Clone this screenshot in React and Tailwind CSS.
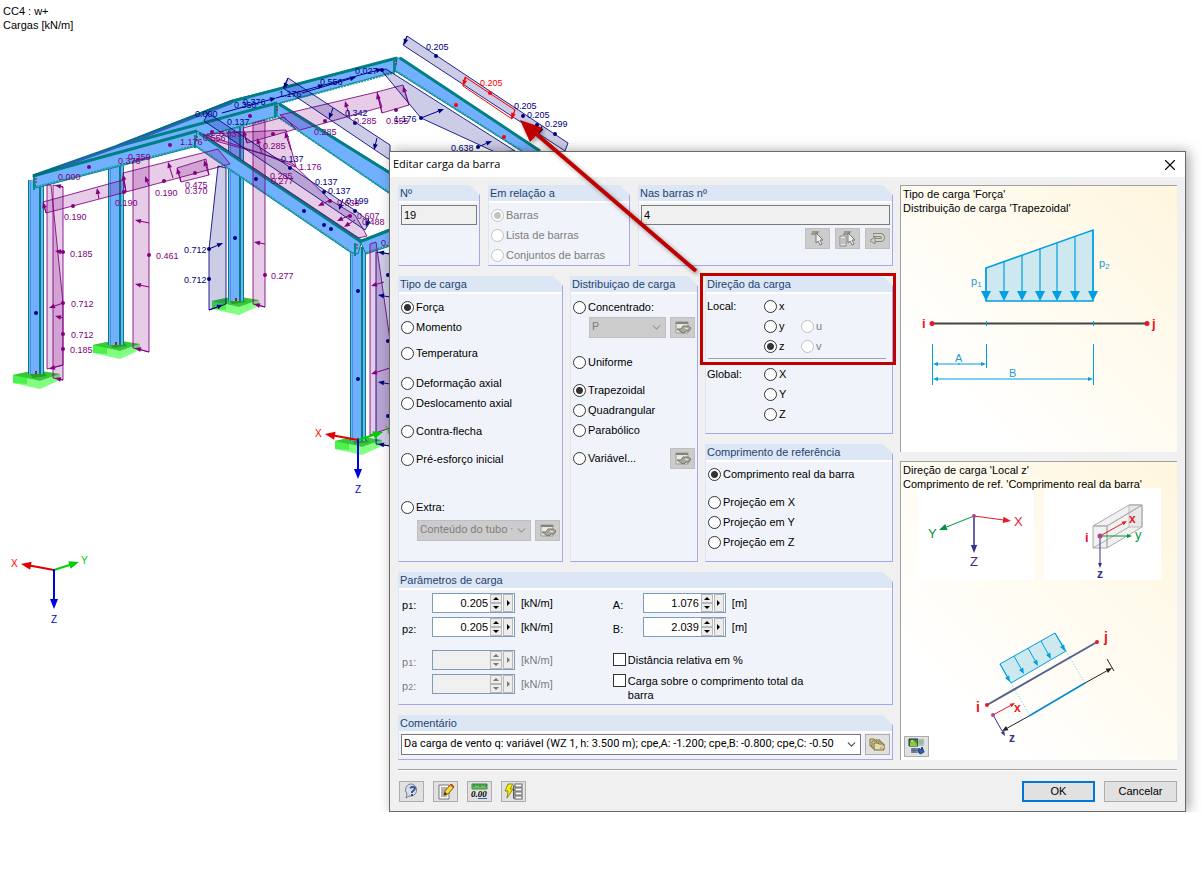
import clsx from 'clsx'
import { ChevronDown, X } from 'lucide-react'

const NAVY = '#000080'
const PURPLE = '#800080'

const SUPPORTS = [[13, 375], [93, 345], [212, 301], [335, 441]]

const COLUMNS = [
  { x: 28, top: 180, bottom: 374 },
  { x: 108, top: 166, bottom: 345 },
  { x: 228, top: 118, bottom: 301 },
  { x: 350, top: 247, bottom: 441 },
]

// Load areas: colour + outline points
const LOADS = [
  [PURPLE, '53,185 63,187 63,380 53,378'],
  [PURPLE, '47,185 51,185 63,303 63,365 47,369'],
  [PURPLE, '133,161 149,157 149,352 133,348'],
  [PURPLE, '253,123 265,120 265,307 253,304'],
  [PURPLE, '43,202 123,180 126,192 46,213'],
  [PURPLE, '123,173 218,149 230,164 126,192'],
  [PURPLE, '177,168 206,159 209,175 181,182'],
  [PURPLE, '243,128 284,117 296,129 247,143'],
  [PURPLE, '280,115 377,92 382,107 300,130'],
  [PURPLE, '377,92 403,85 409,105 382,113'],
  [PURPLE, '207,134 286,130 296,167 263,154 212,140'],
  [PURPLE, '203,134 263,154 292,163 330,200 355,215 367,236 358,238'],
  [PURPLE, '370,244 376,242 390,340 390,428 370,435'],
  [NAVY, '218,166 226,168 226,304 209,310 209,249'],
  [NAVY, '204,121 208,113 356,211 370,222 365,230'],
  [NAVY, '283,88 288,78 390,145 390,160'],
  [NAVY, '403,45 407,36 568,143 565,151'],
  [NAVY, '381,70 386,69 515,151 495,152 421,118'],
  [NAVY, '376,252 390,254 390,446 376,444'],
]

// [colour, x1, y1, x2, y2], head at the second point
const ARROWS = [
  [PURPLE, 63, 252, 55, 251], [PURPLE, 63, 303, 49, 308], [PURPLE, 63, 318, 55, 316],
  [PURPLE, 63, 365, 49, 369], [PURPLE, 63, 380, 55, 378], [PURPLE, 63, 187, 55, 185],
  [PURPLE, 149, 223, 135, 220], [PURPLE, 149, 287, 135, 284], [PURPLE, 149, 352, 135, 348],
  [PURPLE, 265, 244, 254, 242], [PURPLE, 265, 307, 254, 304],
  [PURPLE, 46, 213, 43, 202], [PURPLE, 99, 199, 97, 188], [PURPLE, 126, 192, 123, 174],
  [PURPLE, 149, 186, 145, 176], [PURPLE, 173, 178, 168, 162], [PURPLE, 181, 182, 177, 168],
  [PURPLE, 209, 175, 204, 160], [PURPLE, 247, 143, 243, 130], [PURPLE, 262, 154, 257, 138],
  [PURPLE, 291, 150, 285, 132], [PURPLE, 350, 118, 345, 101], [PURPLE, 382, 113, 377, 93],
  [PURPLE, 409, 105, 403, 86], [PURPLE, 330, 200, 318, 206], [PURPLE, 350, 215, 337, 221],
  [PURPLE, 355, 220, 344, 227], [PURPLE, 384, 282, 371, 286], [PURPLE, 390, 368, 371, 374],
  [NAVY, 209, 249, 223, 243], [NAVY, 209, 310, 223, 305], [NAVY, 288, 78, 284, 89],
  [NAVY, 333, 108, 329, 119], [NAVY, 377, 138, 374, 150], [NAVY, 407, 36, 404, 45],
  [NAVY, 421, 118, 444, 109], [NAVY, 478, 147, 492, 141], [NAVY, 542, 126, 539, 134],
  [NAVY, 390, 297, 378, 295], [NAVY, 390, 384, 378, 382], [NAVY, 390, 446, 378, 444],
  [NAVY, 390, 254, 378, 252], [NAVY, 343, 199, 339, 210], [NAVY, 369, 218, 366, 227],
  [NAVY, 222, 113, 276, 98], [NAVY, 276, 98, 324, 85], [NAVY, 302, 93, 356, 77],
  [NAVY, 324, 85, 382, 69],
]

const DOTS = [
  [PURPLE, 89, 167], [PURPLE, 170, 145], [PURPLE, 250, 116], [PURPLE, 73, 206], [PURPLE, 124, 192],
  [PURPLE, 164, 181], [PURPLE, 195, 173], [PURPLE, 212, 132], [PURPLE, 273, 134], [PURPLE, 325, 121],
  [PURPLE, 396, 110], [PURPLE, 63, 252], [PURPLE, 63, 303], [PURPLE, 63, 334], [PURPLE, 63, 349],
  [PURPLE, 149, 255], [PURPLE, 265, 275], [PURPLE, 330, 201], [PURPLE, 350, 216],
  [NAVY, 209, 249], [NAVY, 209, 279], [NAVY, 36, 313], [NAVY, 235, 238], [NAVY, 358, 291],
  [NAVY, 358, 379], [NAVY, 256, 179], [NAVY, 304, 211], [NAVY, 324, 225], [NAVY, 331, 229],
  [NAVY, 290, 168], [NAVY, 324, 192], [NAVY, 355, 211], [NAVY, 382, 70], [NAVY, 421, 118],
  [NAVY, 436, 56], [NAVY, 523, 116], [NAVY, 537, 125], [NAVY, 555, 134], [NAVY, 478, 147],
  [NAVY, 388, 275], [NAVY, 388, 341], [NAVY, 388, 416], [NAVY, 355, 123],
  ['#ff0000', 456, 105], ['#ff0000', 504, 137], ['#ff0000', 490, 93],
]

const VALUES = [
  [PURPLE, 58, 180, '0.000'], [PURPLE, 64, 220, '0.190'], [PURPLE, 115, 206, '0.190'],
  [PURPLE, 155, 196, '0.190'], [PURPLE, 185, 188, '0.475'], [PURPLE, 185, 194, '0.370'],
  [PURPLE, 118, 164, '0.376'], [PURPLE, 128, 160, '0.350'], [PURPLE, 180, 145, '1.176'],
  [PURPLE, 203, 141, '0.556'], [PURPLE, 219, 137, '0.037'], [PURPLE, 263, 149, '0.285'],
  [PURPLE, 314, 135, '0.285'], [PURPLE, 354, 124, '0.285'], [PURPLE, 386, 124, '0.555'],
  [PURPLE, 299, 170, '1.176'], [PURPLE, 270, 179, '0.285'], [PURPLE, 271, 184, '0.277'],
  [PURPLE, 337, 206, '0.638'], [PURPLE, 357, 219, '0.607'], [PURPLE, 362, 225, '0.488'],
  [PURPLE, 381, 246, '0.0'], [PURPLE, 70, 257, '0.185'], [PURPLE, 71, 307, '0.712'],
  [PURPLE, 71, 338, '0.712'], [PURPLE, 70, 353, '0.185'], [PURPLE, 156, 259, '0.461'],
  [PURPLE, 271, 279, '0.277'],
  [NAVY, 195, 117, '0.000'], [NAVY, 234, 108, '0.350'], [NAVY, 243, 105, '0.376'],
  [NAVY, 279, 97, '1.176'], [NAVY, 320, 85, '0.556'], [NAVY, 355, 74, '0.027'],
  [NAVY, 227, 125, '0.137'], [NAVY, 281, 162, '0.137'], [NAVY, 315, 185, '0.137'],
  [NAVY, 328, 194, '0.137'], [NAVY, 346, 204, '0.199'], [NAVY, 345, 116, '0.342'],
  [NAVY, 394, 122, '1.176'], [NAVY, 451, 151, '0.638'], [NAVY, 184, 253, '0.712'],
  [NAVY, 184, 283, '0.712'], [NAVY, 426, 50, '0.205'], [NAVY, 514, 109, '0.205'],
  [NAVY, 527, 118, '0.205'], [NAVY, 545, 127, '0.299'], ['#ff0000', 480, 86, '0.205'],
]

function Line({ from, to, color, width = 1, head = 6, dash }) {
  const dx = to[0] - from[0]
  const dy = to[1] - from[1]
  const len = Math.hypot(dx, dy)
  const ux = dx / len
  const uy = dy / len
  const bx = to[0] - ux * head
  const by = to[1] - uy * head
  const w = head * 0.4
  return (
    <g>
      <line x1={from[0]} y1={from[1]} x2={head ? bx : to[0]} y2={head ? by : to[1]} stroke={color} strokeWidth={width} strokeDasharray={dash} />
      {head > 0 && (
        <polygon points={`${to[0]},${to[1]} ${bx - uy * w},${by + ux * w} ${bx + uy * w},${by - ux * w}`} fill={color} />
      )}
    </g>
  )
}

function AxisTripod({ x, y }) {
  return (
    <g fontSize="10" strokeLinecap="round">
      <Line from={[x, y]} to={[x - 33, y - 6]} color="#e00000" width={2} head={10} />
      <Line from={[x, y]} to={[x + 25, y - 8]} color="#00d000" width={2} head={10} />
      <Line from={[x, y]} to={[x, y + 39]} color="#0000e0" width={2} head={10} />
      <text x={x - 43} y={y - 3} fill="#ff0000">X</text>
      <text x={x + 27} y={y - 6} fill="#00c800">Y</text>
      <text x={x - 3} y={y + 53} fill="#0000e0">Z</text>
    </g>
  )
}

function Rafter({ points, edge, lip }) {
  return (
    <g>
      <polygon points={points} fill="#71b0ff" stroke="#008080" strokeWidth="1" />
      <polyline points={edge} fill="none" stroke="#007f84" strokeWidth="3" />
      <polyline points={lip} fill="none" stroke="#1b9aa5" strokeWidth="2" strokeDasharray="2 1" />
    </g>
  )
}

function ModelView() {
  return (
    <svg width="600" height="640" viewBox="0 0 600 640" className="absolute left-0 top-0 font-['Liberation_Sans',sans-serif]" aria-label="Modelo estrutural">
      {SUPPORTS.map(([x, y]) => (
        <g key={x} transform={`translate(${x} ${y})`}>
          <polygon points="0,0 27,6 47,-1 47,5 27,14 0,8" fill="#80ff80" />
          <polygon points="0,0 14,-3 14,9 0,8" fill="#4af24a" />
          <polygon points="0,0 23,-5 47,-1 27,6" fill="#38c738" />
          <polygon points="16,-2 30,-3 34,1 20,3" fill="#24a024" />
        </g>
      ))}
      {COLUMNS.map(({ x, top, bottom }) => (
        <g key={x}>
          <rect x={x} y={top} width="16" height={bottom - top} fill="#71b0ff" />
          <rect x={x + 11} y={top} width="2" height={bottom - top} fill="#007f84" />
          <rect x={x + 2} y={top} width="1" height={bottom - top} fill="#4b8fe0" />
          <rect x={x} y={top} width="1" height={bottom - top} fill="#008080" />
          <rect x={x + 15} y={top} width="1" height={bottom - top} fill="#008080" />
          <rect x={x + 7} y={bottom - 3} width="2" height="3" fill="#a02020" />
        </g>
      ))}

      {/* Frames, back to front */}
      <Rafter points="118,146 233,100 397,58 397,71 277,104 233,115 110,152" edge="118,146 233,101 397,58" lip="280,103 397,72" />
      <Rafter points="397,58 401,58 540,151 523,152 395,71" edge="400,58 540,151" lip="396,71 522,151" />
      <Rafter points="60,166 118,146 277,103 277,116 197,138 60,174" edge="118,146 277,103" lip="202,137 277,117" />
      <Rafter points="277,103 281,104 390,172 390,194 277,116" edge="279,104 390,173" lip="278,117 390,193" />
      <Rafter points="33,176 197,131 197,146 36,188" edge="33,176 197,131" lip="36,187 197,145" />
      <polyline points="33,176 118,146 233,101" fill="none" stroke="#006f80" strokeWidth="3" />
      <polyline points="60,167 120,146 232,103" fill="none" stroke="#2d62b8" strokeWidth="2" />
      <Rafter points="197,131 201,133 362,240 358,254 350,252 195,146" edge="199,133 360,241" lip="196,146 351,252" />
      <Rafter points="360,241 390,229 390,246 366,254" edge="359,242 390,230" lip="366,253 390,245" />

      {LOADS.map(([color, points]) => (
        <polygon key={points} points={points} fill={color} fillOpacity="0.2" stroke={color} strokeWidth="1" strokeOpacity="0.85" />
      ))}
      {ARROWS.map(([color, x1, y1, x2, y2]) => (
        <Line key={`${x1}-${y1}-${x2}-${y2}`} from={[x1, y1]} to={[x2, y2]} color={color} />
      ))}
      <path d="M465,77 515,110 512,119 463,86Z" fill="none" stroke="#ff0000" />
      <Line from={[466, 77]} to={[463, 86]} color="#ff0000" />
      <Line from={[515, 110]} to={[511, 119]} color="#ff0000" />
      {DOTS.map(([color, x, y]) => (
        <circle key={`${x}-${y}`} cx={x} cy={y} r="2" fill={color} />
      ))}
      {[[36, 182], [197, 140], [277, 110], [396, 64], [357, 248]].map(([x, y]) => (
        <g key={x}>
          <rect x={x - 3} y={y - 5} width="2" height="13" fill="#008b8b" />
          <line x1={x} y1={y - 4} x2={x} y2={y + 2} stroke="#a00000" strokeDasharray="2 1" />
        </g>
      ))}
      <g fontSize="9">
        {VALUES.map(([color, x, y, value]) => (
          <text key={`${x}-${y}`} x={x} y={y} fill={color}>{value}</text>
        ))}
      </g>
      <AxisTripod x={54} y={570} />
      <AxisTripod x={358} y={440} />
    </svg>
  )
}

function Panel({ title, className, bodyClass, children }) {
  return (
    <section className={clsx('flex flex-col border-b border-l border-r border-b-[#a6a6ee] border-l-[#dce6f5] border-r-[#a6a6ee] bg-[#f0f4fa] [clip-path:polygon(0_0,calc(100%-10px)_0,100%_10px,100%_100%,0_100%)]', className)}>
      <h2 className="h-[18px] border-b-2 border-white bg-[#dce6f5] pl-px leading-4 text-[#1e4470]">{title}</h2>
      <div className={clsx('flex-1', bodyClass)}>{children}</div>
    </section>
  )
}

function Radio({ name, label, checked, disabled, className }) {
  return (
    <label className={clsx('flex h-5 items-center gap-0.5 whitespace-nowrap', disabled && 'text-[#7c7c7c]', className)}>
      <input
        type="radio"
        name={name}
        defaultChecked={checked}
        disabled={disabled}
        className="size-[13px] shrink-0 appearance-none rounded-full border border-[#333] bg-white checked:bg-[radial-gradient(circle,#333_0_3px,white_4px)] disabled:border-[#c0c0c0] disabled:checked:bg-[radial-gradient(circle,#c4c4c4_0_3px,white_4px)]"
      />
      {label}
    </label>
  )
}

function IconButton({ label, disabled, children, className }) {
  return (
    <button
      type="button"
      aria-label={label}
      disabled={disabled}
      className={clsx('flex h-[21px] w-[25px] shrink-0 items-center justify-center border', disabled ? 'border-[#bfbfbf] bg-[#cccccc]' : 'border-[#adadad] bg-[#e1e1e1]', className)}
    >
      {children}
    </button>
  )
}

function Dropdown({ label, value, disabled, className }) {
  return (
    <div className={clsx('relative h-[21px]', className)}>
      <select
        aria-label={label}
        disabled={disabled}
        className={clsx("h-full w-full appearance-none overflow-hidden border pr-4 pl-[2px] font-['Roboto','Liberation_Sans',sans-serif]", disabled ? 'border-[#bfbfbf] bg-[#cccccc] text-[#808080]' : 'border-[#7a7a7a] bg-white text-black')}
      >
        <option>{value}</option>
      </select>
      <ChevronDown size={13} strokeWidth={2} className={clsx('pointer-events-none absolute top-1 right-[3px]', disabled ? 'text-[#999]' : 'text-[#444]')} />
    </div>
  )
}

function NumberField({ id, value, disabled }) {
  const fill = disabled ? '#777' : '#000'
  return (
    <div className={clsx('flex h-5 w-[83px] border border-[#7f9db9] pr-px', disabled ? 'bg-[#f0f0f0]' : 'bg-white')}>
      <input id={id} defaultValue={value} disabled={disabled} className="min-w-0 flex-1 bg-transparent text-right text-[11px]" />
      <div className="ml-0.5 flex w-3 flex-col">
        <button type="button" aria-label="Aumentar" disabled={disabled} className="flex flex-1 items-center justify-center border border-[#b8b8b8] bg-[#ededed]">
          <svg width="6" height="3"><path d="M0 3 3 0 6 3Z" fill={fill} /></svg>
        </button>
        <button type="button" aria-label="Diminuir" disabled={disabled} className="flex flex-1 items-center justify-center border border-[#b8b8b8] bg-[#ededed]">
          <svg width="6" height="3"><path d="M0 0 3 3 6 0Z" fill={fill} /></svg>
        </button>
      </div>
      <button type="button" aria-label="Mais opções" disabled={disabled} className="ml-px flex w-[10px] items-center justify-center border border-[#b8b8b8] bg-[#ededed]">
        <svg width="3" height="6"><path d="M0 0 3 3 0 6Z" fill={fill} /></svg>
      </button>
    </div>
  )
}

function ParamRow({ id, label, sub, value, unit, disabled, className }) {
  return (
    <div className={clsx('flex h-6 items-start', disabled && 'text-[#7c7c7c]', className)}>
      <label htmlFor={id} className="w-[30px] shrink-0 pt-1 leading-4">
        {label}{sub && <span className="text-[9px]">{sub}</span>}:
      </label>
      <NumberField id={id} value={value} disabled={disabled} />
      <span className="pl-1.5 leading-5">[{unit}]</span>
    </div>
  )
}

function CheckBox({ children, className }) {
  return (
    <label className={clsx('flex items-start gap-0.5 leading-[14px]', className)}>
      <input type="checkbox" className="size-[13px] shrink-0 appearance-none border border-[#333] bg-white checked:bg-[#333]" />
      <span>{children}</span>
    </label>
  )
}

const CursorShape = () => (
  <>
    <path d="M3 2h6l-2 3M2 4h5" fill="none" stroke="#8a8a7a" strokeWidth="1.5" />
    <path d="M7 3v10l2-2 2 4 2-1-2-4h3Z" fill="#f2f2ee" stroke="#777" />
  </>
)

const PickIcon = () => <svg width="17" height="17" viewBox="0 0 17 17"><CursorShape /></svg>

const PickListIcon = () => (
  <svg width="19" height="17" viewBox="0 0 19 17">
    <path d="M2 6h6v10H2Z" fill="#e8e8e4" stroke="#888" />
    <path d="M3 9h4M3 11h4M3 13h4" stroke="#999" />
    <g transform="translate(3 0)"><CursorShape /></g>
  </svg>
)

const UndoIcon = () => (
  <svg width="17" height="13" viewBox="0 0 17 13">
    <path d="M4 3h7.500a2.500 2.500 0 0 1 0 5H6" fill="none" stroke="#85857d" strokeWidth="4" />
    <path d="M4.500 3h7a2.500 2.500 0 0 1 0 5H6" fill="none" stroke="#d4d4cc" strokeWidth="2" />
    <path d="M6 5v7L1 8.500Z" fill="#d4d4cc" stroke="#85857d" />
  </svg>
)

const EditIcon = () => (
  <svg width="18" height="14" viewBox="0 0 18 14">
    <path d="M2 1h12v11H2Z" fill="#e6e6de" stroke="#999" />
    <path d="M2 2h12" stroke="#83837b" strokeWidth="2" />
    <path d="M3 8 7 8 9 5h5l3 2-2 3h-3l-2 2-3-1Z" fill="#a8a89e" stroke="#77776f" />
    <path d="M4 5h4M11 7l3 1" stroke="#f0f0ea" />
  </svg>
)

const LibraryIcon = () => (
  <svg width="17" height="13" viewBox="0 0 17 13">
    {[[1, 1], [3, 3], [5, 5]].map(([x, y]) => (
      <path key={x} d={`M${x} ${y}h4l1 1h5v6h-10Z`} fill="#e3dab0" stroke="#7a6a35" />
    ))}
    <path d="M11 10 15 7v3Z" fill="#fffbe2" stroke="#7a6a35" strokeWidth="0.5" />
  </svg>
)

const HelpIcon = () => (
  <svg width="17" height="17" viewBox="0 0 17 17">
    <path d="M9 1a6 6 0 1 1-3 12L3 15l1-4A6 6 0 0 1 9 1Z" fill="#d5dcec" stroke="#777f91" />
    <path d="M7 5q3-2 5 0 0 2-3 4v1M9 11v2" fill="none" stroke="#3a5189" strokeWidth="2" />
  </svg>
)

const NoteIcon = () => (
  <svg width="18" height="17" viewBox="0 0 18 17">
    <path d="M2 2h10v14H2Z" fill="#fff" stroke="#777" />
    <path d="M4 5h6M4 7h6M4 9h4M4 11h4M4 13h6" stroke="#666" />
    <path d="m7 12 1-4 6-7 3 3-6 7Z" fill="#ffd83a" stroke="#805c00" />
    <path d="m13 2 3 3 1-2-2-2Z" fill="#d04030" />
    <path d="m7 12 1-3 2 2Z" fill="#222" />
  </svg>
)

const UnitsIcon = () => (
  <svg width="17" height="17" viewBox="0 0 17 17">
    <path d="M1 1h15v5H1Z" fill="#68bd67" stroke="#3a913b" />
    <path d="M3 1v3M6 1v2M9 1v3M12 1v2M15 1v3" stroke="#286c29" />
    <text x="0" y="14" fontSize="9" fontFamily="Liberation Serif, serif" fontWeight="bold" fontStyle="italic">0.00</text>
    <path d="M7 15.5h9" stroke="#2d5fb0" />
  </svg>
)

const TreeIcon = () => (
  <svg width="19" height="17" viewBox="0 0 19 17">
    <path d="M4 1h5L6 6h3l-6 9 1-7H1Z" fill="#f4ee00" stroke="#76720c" strokeWidth="0.8" />
    <path d="M9 3h2M9 7h2M9 11h2M9 15h2M9.500 3v12" stroke="#555" />
    {[1, 5, 9, 13].map(y => <rect key={y} x="11" y={y} width="7" height="3" fill="#fff" stroke="#666" />)}
  </svg>
)

const RenderIcon = () => (
  <svg width="17" height="17" viewBox="0 0 17 17">
    <path d="M1 1h9v7H1Z" fill="#3e8c4a" stroke="#234" />
    <path d="M2 5 5 2l4 4v2H2Z" fill="#89cc39" />
    <circle cx="4" cy="3" r="1" fill="#ffe14a" />
    <path d="M10 1h6v7h-6Z" fill="#b9cbbd" />
    <path d="M12 1v7M14 1v7M10 3h6M10 5h6" stroke="#7e9b8e" strokeWidth="0.500" />
    <path d="M3 10h9v5H3Z" fill="#8294ac" />
    <path d="M5 10v5M7 10v5M3 12h9" stroke="#52657c" />
    <path d="M10 12q2-3 3 0l1-3 2 5-4 2Z" fill="#2a65b5" stroke="#153a78" />
  </svg>
)

function LoadDiagram() {
  const blue = '#009fe3'
  const xs = [986, 1004, 1022, 1040, 1057, 1075, 1093]
  return (
    <svg viewBox="901 216 276 176" className="block w-full" aria-label="Carga trapezoidal">
      <path d="M986 268 1093 230V301H986Z" fill="#cde8ef" stroke={blue} strokeWidth="1.500" />
      {xs.map(x => (
        <g key={x}>
          <line x1={x} x2={x} y1={268 - (x - 986) * 0.355} y2="292" stroke={blue} strokeWidth="1.200" />
          <path d={`M${x - 5} 291h10L${x} 301Z`} fill={blue} />
        </g>
      ))}
      <line x1="932" x2="1147" y1="323.500" y2="323.500" stroke="#444" strokeWidth="2" />
      <path d="M986.500 321v5M1093.500 321v5M932.500 344v41M986.500 344v24M1093.500 344v41" stroke={blue} fill="none" />
      <circle cx="932" cy="323.500" r="2.500" fill="#e6192a" />
      <circle cx="1147" cy="323.500" r="2.500" fill="#e6192a" />
      <Line from={[960, 364]} to={[933, 364]} color={blue} head={5} />
      <Line from={[958, 364]} to={[986, 364]} color={blue} head={5} />
      <Line from={[1000, 379]} to={[933, 379]} color={blue} head={5} />
      <Line from={[1000, 379]} to={[1093, 379]} color={blue} head={5} />
      <g fill="#1a9ad6" fontSize="11">
        <text x="971" y="285">p<tspan fontSize="8" dy="2">1</tspan></text>
        <text x="1099" y="267">p<tspan fontSize="8" dy="2">2</tspan></text>
        <text x="955" y="362">A</text>
        <text x="1009" y="377">B</text>
      </g>
      <g fill="#e6192a" fontSize="13" fontWeight="bold">
        <text x="922" y="328">i</text>
        <text x="1152" y="328">j</text>
      </g>
    </svg>
  )
}

function DirectionDiagram() {
  const blue = '#009fe3'
  const red = '#e6192a'
  const green = '#009640'
  const violet = '#39308a'
  return (
    <svg viewBox="901 492 276 258" className="block w-full overflow-visible" aria-label="Direção da carga">
      <rect x="917" y="488" width="117" height="92" fill="#fff" />
      <rect x="1044" y="488" width="117" height="92" fill="#fff" />

      {/* Global axes */}
      <Line from={[974, 516]} to={[1011, 521]} color={red} head={8} />
      <Line from={[974, 516]} to={[939, 530]} color={green} head={8} />
      <Line from={[974, 516]} to={[974, 553]} color={violet} width={1.5} head={8} />
      <circle cx="974" cy="516" r="2" fill="#b0468c" />
      <g fontSize="13">
        <text x="1014" y="526" fill={red}>X</text>
        <text x="928" y="538" fill={green}>Y</text>
        <text x="970" y="566" fill={violet}>Z</text>
      </g>

      {/* Member axes */}
      <g stroke="#aaa" fill="#ddd" fillOpacity="0.400">
        <path d="M1129 505h13v22h-13Z" />
        <path d="M1107 526 1142 505V527L1107 548Z" />
        <path d="M1093 526 1129 505H1142L1107 526Z" />
        <path d="M1093 526h14v22h-14ZM1093 548 1129 527" />
      </g>
      <Line from={[1100, 536]} to={[1127, 521]} color={red} head={5} />
      <Line from={[1100, 536]} to={[1132, 536]} color={green} head={5} />
      <Line from={[1100, 536]} to={[1100, 568]} color={violet} head={5} />
      <circle cx="1100" cy="536" r="2.500" fill="#b0468c" />
      <g fontSize="13" fontWeight="bold">
        <text x="1085" y="542" fill={red}>i</text>
        <text x="1129" y="523" fill={red} fontSize="12">x</text>
        <text x="1135" y="539" fill={green} fontWeight="normal">y</text>
        <text x="1097" y="578" fill={violet} fontSize="12">z</text>
      </g>

      {/* Loaded member */}
      <path d="M1000 664 1055 633 1066 651 1011 683Z" fill="#cde8ef" stroke={blue} />
      {[[1000, 664], [1014, 656], [1028, 648], [1041, 641], [1055, 633]].map(([x, y]) => (
        <Line key={x} from={[x, y]} to={[x + 10, y + 18]} color={blue} head={6} />
      ))}
      <path d="M1011 683 1029 714M1066 651 1085 683" stroke="#66c4ee" strokeDasharray="1 2" />
      <line x1="987" y1="705" x2="1097" y2="642" stroke="#56618f" strokeWidth="2" />
      <circle cx="987" cy="705" r="2" fill={red} />
      <circle cx="1097" cy="642" r="2" fill={red} />
      <line x1="1029" y1="716" x2="1085" y2="683" stroke="#0088cf" strokeWidth="1.500" />
      <Line from={[1029, 716]} to={[1002, 731]} color="#222" />
      <Line from={[1085, 683]} to={[1112, 668]} color="#222" />
      <path d="M1107 659 1114 671" stroke="#222" />
      <Line from={[993, 715]} to={[1015, 703]} color={red} head={5} />
      <Line from={[993, 715]} to={[1005, 736]} color={violet} head={5} />
      <circle cx="993" cy="715" r="2" fill="#b0468c" />
      <g fontSize="14" fontWeight="bold">
        <text x="976" y="712" fill={red}>i</text>
        <text x="1104" y="642" fill={red}>j</text>
        <text x="1014" y="712" fill={red} fontSize="12">x</text>
        <text x="1009" y="742" fill={violet} fontSize="12">z</text>
      </g>
    </svg>
  )
}

function Preview({ lines, className, children }) {
  return (
    <figure className={clsx('relative border-t border-l border-[#a0a0a0] bg-[linear-gradient(45deg,#ffffff_20%,#fff6de)]', className)}>
      <figcaption className="relative z-10 pt-px pb-px pl-0.5 leading-[14px]">
        {lines.map(l => <p key={l} className="whitespace-nowrap">{l}</p>)}
      </figcaption>
      {children}
    </figure>
  )
}

function LoadDirection() {
  return (
    <div className="relative">
      <Panel title="Direção da carga" className="h-[158px]" bodyClass="pt-0.5">
        <div className="flex pr-1">
          <span className="w-[58px] pl-px leading-5">Local:</span>
          <div className="flex w-[37px] flex-col">
            <Radio name="direction" label="x" />
            <Radio name="direction" label="y" />
            <Radio name="direction" label="z" checked />
          </div>
          <div className="flex flex-col pt-5">
            <Radio name="direction" label="u" disabled />
            <Radio name="direction" label="v" disabled />
          </div>
        </div>
        <hr className="mt-0.5 mr-1.5 mb-[5px] ml-0.5 border-[#a0a0a0]" />
        <div className="flex">
          <span className="w-[58px] pl-px leading-5">Global:</span>
          <div className="flex flex-col">
            <Radio name="direction" label="X" />
            <Radio name="direction" label="Y" />
            <Radio name="direction" label="Z" />
          </div>
        </div>
      </Panel>
      <div className="pointer-events-none absolute -top-[3px] -right-[3px] -left-[5px] h-[92px] border-[3px] border-[#c00000]" />
    </div>
  )
}

function LoadDialog() {
  return (
    <div role="dialog" aria-label="Editar carga da barra" className="relative mr-4 ml-[389px] border border-[#6a6a6a] bg-[#f0f0f0] shadow-[3px_0_12px_rgba(0,0,0,0.35)] [clip-path:inset(-20px_-20px_0_-20px)]">
      <header className="flex h-[25px] items-center justify-between bg-white pr-1.5 pl-[3px]">
        <h1 className="font-['Open_Sans',sans-serif] text-[11px]">Editar carga da barra</h1>
        <button type="button" aria-label="Fechar"><X size={18} strokeWidth={1.5} /></button>
      </header>

      <form className="px-2 pt-2">
        <div className="grid grid-cols-[minmax(0,495fr)_minmax(0,277fr)] gap-[7px]">
          <div className="flex flex-col gap-2.5">
            <div className="grid grid-cols-[82fr_142fr_255fr] gap-2">
              <Panel title="Nº" bodyClass="px-0.5 pt-0.5">
                <input aria-label="Nº" defaultValue="19" className="h-5 w-full border border-[#7a7a7a] bg-[#f0f0f0] px-0.5" />
              </Panel>
              <Panel title="Em relação a" bodyClass="px-0.5 pt-0.5">
                <Radio name="relation" label="Barras" checked disabled />
                <Radio name="relation" label="Lista de barras" disabled />
                <Radio name="relation" label="Conjuntos de barras" disabled />
              </Panel>
              <Panel title="Nas barras nº" bodyClass="px-0.5 pt-0.5">
                <input aria-label="Nas barras nº" defaultValue="4" className="h-5 w-full border border-[#7a7a7a] bg-[#f0f0f0] px-0.5" />
                <div className="mt-[3px] flex justify-end gap-[5px]">
                  <IconButton label="Selecionar barra" disabled><PickIcon /></IconButton>
                  <IconButton label="Selecionar da lista" disabled><PickListIcon /></IconButton>
                  <IconButton label="Inverter" disabled><UndoIcon /></IconButton>
                </div>
              </Panel>
            </div>

            <div className="grid grid-cols-[165fr_128fr_188fr] gap-[7px]">
              <Panel title="Tipo de carga" bodyClass="px-0.5 pt-[3px] pb-5">
                <Radio name="type" label="Força" checked />
                <Radio name="type" label="Momento" />
                <Radio name="type" label="Temperatura" className="mt-1.5" />
                <Radio name="type" label="Deformação axial" className="mt-2.5" />
                <Radio name="type" label="Deslocamento axial" />
                <Radio name="type" label="Contra-flecha" className="mt-2" />
                <Radio name="type" label="Pré-esforço inicial" className="mt-2" />
                <Radio name="type" label="Extra:" className="mt-7" />
                <div className="mt-[3px] flex gap-1 pl-4">
                  <Dropdown label="Extra" value="Conteúdo do tubo ·" disabled className="flex-1" />
                  <IconButton label="Editar extra" disabled><EditIcon /></IconButton>
                </div>
              </Panel>

              <Panel title="Distribuiçao de carga" bodyClass="px-0.5 pt-[3px]">
                <Radio name="distribution" label="Concentrado:" />
                <div className="flex gap-1 pl-4">
                  <Dropdown label="Concentrado" value="P" disabled className="flex-1" />
                  <IconButton label="Editar carga concentrada" disabled><EditIcon /></IconButton>
                </div>
                <Radio name="distribution" label="Uniforme" className="mt-3.5" />
                <Radio name="distribution" label="Trapezoidal" checked className="mt-2" />
                <Radio name="distribution" label="Quadrangular" />
                <Radio name="distribution" label="Parabólico" />
                <div className="mt-2 flex items-center justify-between">
                  <Radio name="distribution" label="Variável..." />
                  <IconButton label="Editar carga variável" disabled><EditIcon /></IconButton>
                </div>
              </Panel>

              <div className="flex flex-col gap-2.5">
                <LoadDirection />
                <Panel title="Comprimento de referência" className="flex-1" bodyClass="px-0.5 pt-0.5">
                  <Radio name="length" label="Comprimento real da barra" checked />
                  <Radio name="length" label="Projeção em X" className="mt-2" />
                  <Radio name="length" label="Projeção em Y" />
                  <Radio name="length" label="Projeção em Z" />
                </Panel>
              </div>
            </div>

            <Panel title="Parâmetros de carga" bodyClass="grid grid-cols-[213fr_280fr] pt-[3px] pr-0.5 pb-0.5 pl-[3px]">
              <div>
                <ParamRow id="p1" label="p" sub="1" value="0.205" unit="kN/m" />
                <ParamRow id="p2" label="p" sub="2" value="0.205" unit="kN/m" />
                <ParamRow id="p1b" label="p" sub="1" unit="kN/m" disabled className="mt-[9px]" />
                <ParamRow id="p2b" label="p" sub="2" unit="kN/m" disabled />
              </div>
              <div>
                <ParamRow id="a" label="A" value="1.076" unit="m" />
                <ParamRow id="b" label="B" value="2.039" unit="m" />
                <CheckBox className="mt-3">Distância relativa em %</CheckBox>
                <CheckBox className="mt-[7px] max-w-[200px]">Carga sobre o comprimento total da barra</CheckBox>
              </div>
            </Panel>

            <Panel title="Comentário" bodyClass="flex gap-1 px-0.5 pt-px pb-1">
              <Dropdown
                label="Comentário"
                value="Da carga de vento q: variável (WZ 1, h: 3.500 m); cpe,A: -1.200; cpe,B: -0.800; cpe,C: -0.50"
                className="min-w-0 flex-1"
              />
              <IconButton label="Biblioteca de comentários"><LibraryIcon /></IconButton>
            </Panel>
          </div>

          <div className="flex flex-col gap-[9px]">
            <Preview lines={["Tipo de carga 'Força'", "Distribuição de carga 'Trapezoidal'"]} className="h-[267px]">
              <LoadDiagram />
            </Preview>
            <Preview lines={["Direção de carga 'Local z'", "Comprimento de ref. 'Comprimento real da barra'"]} className="flex-1">
              <DirectionDiagram />
              <IconButton label="Vista" className="absolute bottom-[3px] left-[3px]"><RenderIcon /></IconButton>
            </Preview>
          </div>
        </div>

        <div className="mt-[9px] h-0.5 border-t border-[#a0a0a0] bg-white" />
        <footer className="flex items-center gap-[9px] pt-2.5 pb-[9px] pl-px">
          <IconButton label="Ajuda"><HelpIcon /></IconButton>
          <IconButton label="Comentário"><NoteIcon /></IconButton>
          <IconButton label="Unidades"><UnitsIcon /></IconButton>
          <IconButton label="Padrões"><TreeIcon /></IconButton>
          <button type="button" className="ml-auto h-[21px] w-[73px] border-2 border-[#0078d7] bg-[#e1e1e1]">OK</button>
          <button type="button" className="h-[21px] w-[73px] border border-[#adadad] bg-[#e1e1e1]">Cancelar</button>
        </footer>
      </form>
    </div>
  )
}

export default function App() {
  return (
    <main className="relative min-h-screen overflow-hidden bg-white pb-14 font-['Liberation_Sans',Arial,sans-serif] text-[11px] text-black">
      <ModelView />
      <div className="relative h-[151px] px-[3px] pt-1 leading-[14px]">
        <p>CC4 : w+</p>
        <p>Cargas [kN/m]</p>
      </div>
      <LoadDialog />
      <svg width="200" height="170" viewBox="510 110 200 170" className="pointer-events-none absolute top-[110px] left-[510px] drop-shadow-[2px_2px_2px_rgba(0,0,0,0.4)]" aria-hidden="true">
        <line x1="696" y1="271" x2="534" y2="132" stroke="#c00000" strokeWidth="4" />
        <path d="M520 120 543 128 530 142Z" fill="#c00000" />
      </svg>
    </main>
  )
}
